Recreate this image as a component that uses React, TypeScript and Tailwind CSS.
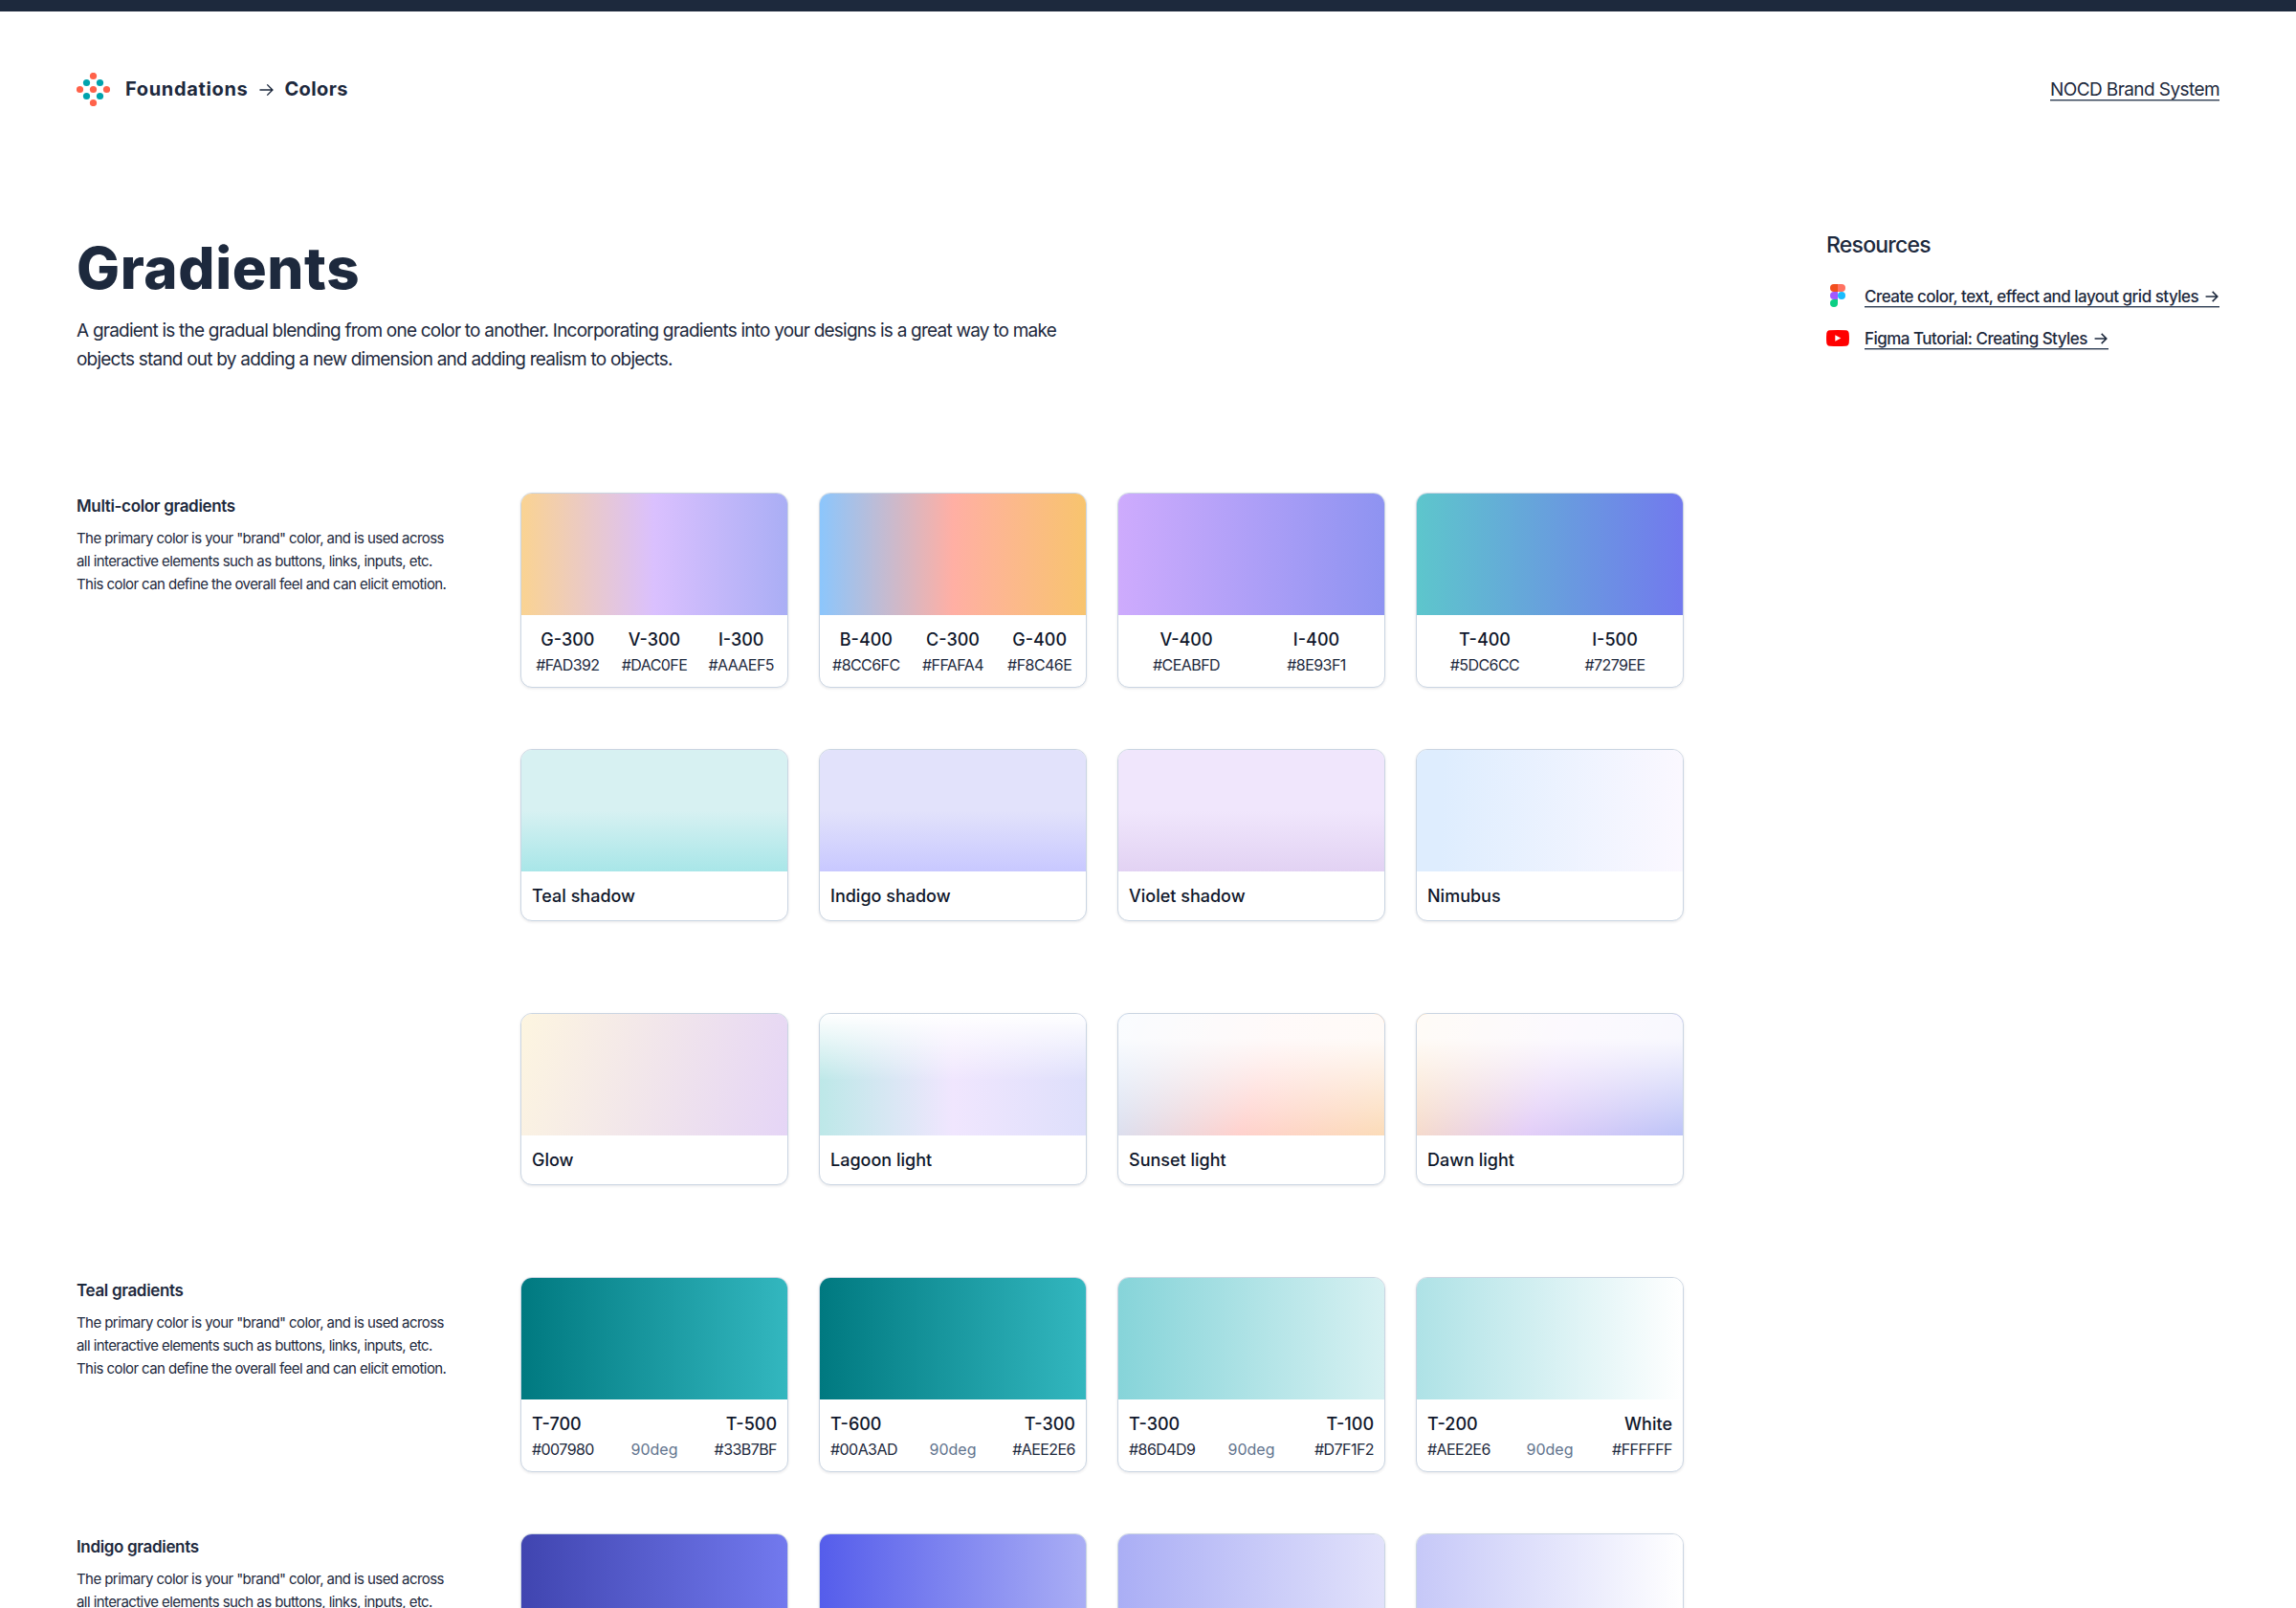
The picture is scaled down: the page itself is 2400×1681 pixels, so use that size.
import type { ReactNode } from 'react';
import { clsx } from 'clsx';

interface Stop {
  name: string;
  hex: string;
}

interface GradientCard {
  swatch: string;
  label?: string;
  stops?: Stop[];
  angle?: string;
}

interface Section {
  title?: string;
  gap: string;
  cards: GradientCard[];
}

const SECTIONS: Section[] = [
  {
    title: 'Multi-color gradients',
    gap: 'mb-16',
    cards: [
      {
        swatch: 'bg-[linear-gradient(90deg,#FAD392,#DAC0FE_50%,#AAAEF5)]',
        stops: [{ name: 'G-300', hex: '#FAD392' }, { name: 'V-300', hex: '#DAC0FE' }, { name: 'I-300', hex: '#AAAEF5' }],
      },
      {
        swatch: 'bg-[linear-gradient(90deg,#8CC6FC,#FFAFA4_50%,#F8C46E)]',
        stops: [{ name: 'B-400', hex: '#8CC6FC' }, { name: 'C-300', hex: '#FFAFA4' }, { name: 'G-400', hex: '#F8C46E' }],
      },
      {
        swatch: 'bg-[linear-gradient(90deg,#CEABFD,#8E93F1)]',
        stops: [{ name: 'V-400', hex: '#CEABFD' }, { name: 'I-400', hex: '#8E93F1' }],
      },
      {
        swatch: 'bg-[linear-gradient(90deg,#5DC6CC,#7279EE)]',
        stops: [{ name: 'T-400', hex: '#5DC6CC' }, { name: 'I-500', hex: '#7279EE' }],
      },
    ],
  },
  {
    gap: 'mb-24',
    cards: [
      { label: 'Teal shadow', swatch: 'bg-[linear-gradient(180deg,#D7F1F2_50%,#A8E6E8)]' },
      { label: 'Indigo shadow', swatch: 'bg-[linear-gradient(180deg,#E2E2FB_50%,#C8C8FF)]' },
      { label: 'Violet shadow', swatch: 'bg-[linear-gradient(180deg,#F0E6FC_50%,#E2D2F3)]' },
      { label: 'Nimubus', swatch: 'bg-[linear-gradient(92deg,#DEEDFE_10%,#FBF8FF)]' },
    ],
  },
  {
    gap: 'mb-24',
    cards: [
      { label: 'Glow', swatch: 'bg-[linear-gradient(105deg,#FDF5E0,#E5D5F6)]' },
      {
        label: 'Lagoon light',
        swatch: 'bg-[linear-gradient(180deg,#ffffff,#ffffff00_55%),linear-gradient(90deg,#BDE8E8,#F0E6FE_50%,#DEDFFB)]',
      },
      {
        label: 'Sunset light',
        swatch: 'bg-[linear-gradient(180deg,#fffffff0_20%,#ffffff80),linear-gradient(110deg,#A0C8F5,#FFA39A_53%,#F8B870)]',
      },
      {
        label: 'Dawn light',
        swatch: 'bg-[linear-gradient(180deg,#fffffff0_20%,#ffffff80),linear-gradient(112deg,#FBC070,#C79CF0_50%,#7A88F0)]',
      },
    ],
  },
  {
    title: 'Teal gradients',
    gap: 'mb-16',
    cards: [
      {
        angle: '90deg',
        swatch: 'bg-[linear-gradient(90deg,#007980,#33B7BF)]',
        stops: [{ name: 'T-700', hex: '#007980' }, { name: 'T-500', hex: '#33B7BF' }],
      },
      {
        angle: '90deg',
        swatch: 'bg-[linear-gradient(90deg,#007980,#33B7BF)]',
        stops: [{ name: 'T-600', hex: '#00A3AD' }, { name: 'T-300', hex: '#AEE2E6' }],
      },
      {
        angle: '90deg',
        swatch: 'bg-[linear-gradient(90deg,#86D4D9,#D7F1F2)]',
        stops: [{ name: 'T-300', hex: '#86D4D9' }, { name: 'T-100', hex: '#D7F1F2' }],
      },
      {
        angle: '90deg',
        swatch: 'bg-[linear-gradient(90deg,#AEE2E6,#FFFFFF)]',
        stops: [{ name: 'T-200', hex: '#AEE2E6' }, { name: 'White', hex: '#FFFFFF' }],
      },
    ],
  },
  {
    title: 'Indigo gradients',
    gap: '',
    cards: [
      { swatch: 'bg-[linear-gradient(90deg,#4045B0,#7279EE)]' },
      { swatch: 'bg-[linear-gradient(90deg,#555DEB,#AAAEF5)]' },
      { swatch: 'bg-[linear-gradient(90deg,#AAAEF5,#E2E2FB)]' },
      { swatch: 'bg-[linear-gradient(90deg,#C6C8F8,#FFFFFF)]' },
    ],
  },
];

const LOGO_DOTS = [
  [17.5, 3.5, '#FF624A'], [10.5, 10.5, '#00A3AD'], [24.5, 10.5, '#00A3AD'],
  [3.5, 17.5, '#FF624A'], [17.5, 17.5, '#FF624A'], [31.5, 17.5, '#FF624A'],
  [10.5, 24.5, '#00A3AD'], [24.5, 24.5, '#00A3AD'], [17.5, 31.5, '#FF624A'],
] as const;

function Logo() {
  return (
    <svg viewBox="0 0 35 35" className="size-[35px]">
      {LOGO_DOTS.map(([x, y, fill]) => <circle key={`${x}-${y}`} cx={x} cy={y} r="3.6" fill={fill} />)}
    </svg>
  );
}

function Arrow({ className, width }: { className: string; width: number }) {
  return (
    <svg viewBox="0 0 16 14" className={className} fill="none" stroke="currentColor" strokeWidth={width}>
      <path d="M0.5 7H14.8M8.8 1L14.8 7L8.8 13" />
    </svg>
  );
}

function FigmaIcon() {
  return (
    <svg viewBox="0 0 16 24" className="h-6 w-4">
      <path d="M4 0H8V8H4A4 4 0 0 1 4 0Z" fill="#F24E1E" />
      <path d="M8 0H12A4 4 0 0 1 12 8H8Z" fill="#FF7262" />
      <path d="M4 8H8V16H4A4 4 0 0 1 4 8Z" fill="#A259FF" />
      <circle cx="12" cy="12" r="4" fill="#1ABCFE" />
      <path d="M4 16H8V20A4 4 0 1 1 4 16Z" fill="#0ACF83" />
    </svg>
  );
}

function YoutubeIcon() {
  return (
    <svg viewBox="0 0 24 17" className="h-[17px] w-6">
      <path d="M3.5 0.3Q12 -0.2 20.5 0.3Q23.4 0.6 23.7 3.5Q24.2 8.5 23.7 13.5Q23.4 16.4 20.5 16.7Q12 17.2 3.5 16.7Q0.6 16.4 0.3 13.5Q-0.2 8.5 0.3 3.5Q0.6 0.6 3.5 0.3Z" fill="#FF0000" />
      <path d="M9.3 5.2L15.3 8.5L9.3 11.8Z" fill="#fff" />
    </svg>
  );
}

function ResourceLink({ icon, text, className }: { icon: ReactNode; text: string; className: string }) {
  return (
    <div className={clsx('flex h-6 items-center gap-4', className)}>
      <span className="flex w-6 shrink-0 justify-center">{icon}</span>
      <a className="flex items-center whitespace-nowrap border-b border-slate-700 pt-0.5 pr-px text-[17px]/5 font-medium tracking-[-0.52px] shadow-[0_1px_#1e293b60]">
        {text}
        <Arrow className="ml-[7px] h-3 w-3.5" width={1.8} />
      </a>
    </div>
  );
}

function Card({ card }: { card: GradientCard }) {
  return (
    <div className="w-[280px] overflow-hidden rounded-xl border border-slate-300 bg-white shadow-[0_1px_3px_rgba(15,23,42,0.1)]">
      <div className={clsx('h-[127px]', card.swatch)} />
      {card.label && (
        <p className="px-[11px] pt-3 pb-[11px] text-lg/7 font-medium text-slate-900">{card.label}</p>
      )}
      {card.stops && !card.angle && (
        <div className="flex px-[3px] pt-3 pb-[11px] text-center">
          {card.stops.map(stop => (
            <div key={stop.name} className="flex-1">
              <p className="text-lg/7 font-medium text-slate-900">{stop.name}</p>
              <p className="text-base/6 tracking-[-0.035em]">{stop.hex}</p>
            </div>
          ))}
        </div>
      )}
      {card.stops && card.angle && (
        <div className="px-[11px] pt-3 pb-[11px]">
          <div className="flex justify-between text-lg/7 font-medium text-slate-900">
            {card.stops.map(stop => <span key={stop.name}>{stop.name}</span>)}
          </div>
          <div className="grid grid-cols-3 text-base/6 tracking-[-0.035em]">
            <span>{card.stops[0].hex}</span>
            <span className="text-center tracking-normal text-slate-500">{card.angle}</span>
            <span className="text-right">{card.stops[1].hex}</span>
          </div>
        </div>
      )}
    </div>
  );
}

export default function App() {
  return (
    <div className="h-[1681px] w-[2400px] overflow-hidden border-t-[12px] border-slate-800 bg-white px-20 font-['Inter',sans-serif] text-slate-800">
      <header className="flex h-[163px] items-center justify-between">
        <div className="flex items-center text-xl font-bold">
          <Logo />
          <span className="ml-4 pb-0.5 tracking-[0.65px]">Foundations</span>
          <Arrow className="mr-[11px] ml-3 h-3.5 w-[15px]" width={1.5} />
          <span className="pb-0.5 tracking-[0.4px]">Colors</span>
        </div>
        <a className="border-b border-slate-700 pt-0.5 text-[19px]/5 tracking-[-0.58px] shadow-[0_1px_#1e293b60]">NOCD Brand System</a>
      </header>

      <div className="flex h-[340px] justify-between pt-[60px]">
        <div>
          <h1 className="text-[60px]/[90px] font-extrabold tracking-[0.6px]">Gradients</h1>
          <p className="mt-1.5 whitespace-nowrap text-[19px]/[30px] tracking-[-0.78px]">
            A gradient is the gradual blending from one color to another. Incorporating gradients into your designs is a great way to make<br />
            objects stand out by adding a new dimension and adding realism to objects.
          </p>
        </div>
        <aside className="w-[411px] pt-[3px]">
          <h2 className="text-[23px]/9 font-medium tracking-[-0.77px]">Resources</h2>
          <ResourceLink className="mt-[23px]" icon={<FigmaIcon />} text="Create color, text, effect and layout grid styles" />
          <ResourceLink className="mt-5" icon={<YoutubeIcon />} text="Figma Tutorial: Creating Styles" />
        </aside>
      </div>

      {SECTIONS.map((section, idx) => (
        <section key={idx} className={clsx('flex', section.gap)}>
          <div className="w-[464px]">
            {section.title && (
              <>
                <h3 className="text-[17px]/7 font-semibold tracking-[-0.34px]">{section.title}</h3>
                <p className="mt-2 whitespace-nowrap text-[15px]/6 tracking-[-0.57px]">
                  The primary color is your "brand" color, and is used across<br />
                  all interactive elements such as buttons, links, inputs, etc.
                  {section.title !== 'Indigo gradients' && (
                    <><br />This color can define the overall feel and can elicit emotion.</>
                  )}
                </p>
              </>
            )}
          </div>
          <div className="flex gap-8">
            {section.cards.map((card, i) => <Card key={i} card={card} />)}
          </div>
        </section>
      ))}
    </div>
  );
}
